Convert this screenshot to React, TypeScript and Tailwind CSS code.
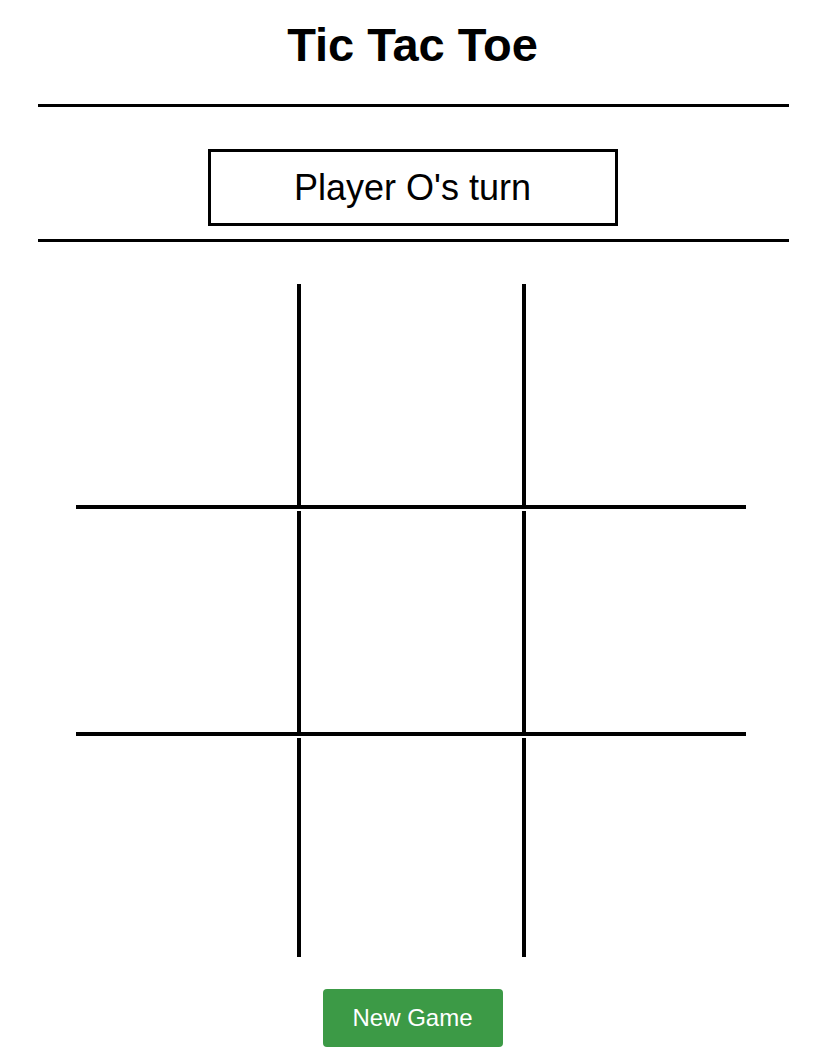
import { useState } from "react";

type Cell = "X" | "O" | null;

export default function App() {
    const [cells, setCells] = useState<Cell[]>(Array(9).fill(null));
    const [xNext, setXNext] = useState(false);

    const play = (i: number) => {
        if (cells[i]) return;
        const next = cells.slice();
        next[i] = xNext ? "X" : "O";
        setCells(next);
        setXNext(!xNext);
    };

    const reset = () => {
        setCells(Array(9).fill(null));
        setXNext(false);
    };

    return (
        <div className="min-h-screen bg-white font-['Liberation_Sans',Arial,sans-serif] text-black flex flex-col items-center">
            <h1 className="mt-[21px] text-[47px] leading-[48px] font-bold">Tic Tac Toe</h1>

            <hr className="mt-[35px] ml-[2px] w-[751px] h-[3px] bg-black border-0" />

            <div className="mt-[42px] w-[410px] h-[77px] border-[3px] border-black flex items-center justify-center text-[36px]">
                Player {xNext ? "X" : "O"}'s turn
            </div>

            <hr className="mt-[13px] ml-[2px] w-[751px] h-[3px] bg-black border-0" />

            {/* доска */}
            <div className="mt-[42px] mr-[3px] flex flex-col gap-[2px]">
                {[0, 1, 2].map((row) => (
                    <div key={row} className="flex">
                        {[0, 1, 2].map((col) => {
                            const i = row * 3 + col;
                            return (
                                <button
                                    key={col}
                                    onClick={() => play(i)}
                                    className={`flex items-center justify-center text-[120px] font-bold border-black ${
                                        col < 2 ? "w-[225px] border-r-4" : "w-[220px]"
                                    } ${row < 2 ? "h-[225px] border-b-4" : "h-[219px]"}`}
                                >
                                    {cells[i]}
                                </button>
                            );
                        })}
                    </div>
                ))}
            </div>

            <button
                onClick={reset}
                className="mt-[32px] w-[180px] h-[58px] rounded-[4px] bg-[#3c9a46] text-white text-[24px]"
            >
                New Game
            </button>
        </div>
    );
}
